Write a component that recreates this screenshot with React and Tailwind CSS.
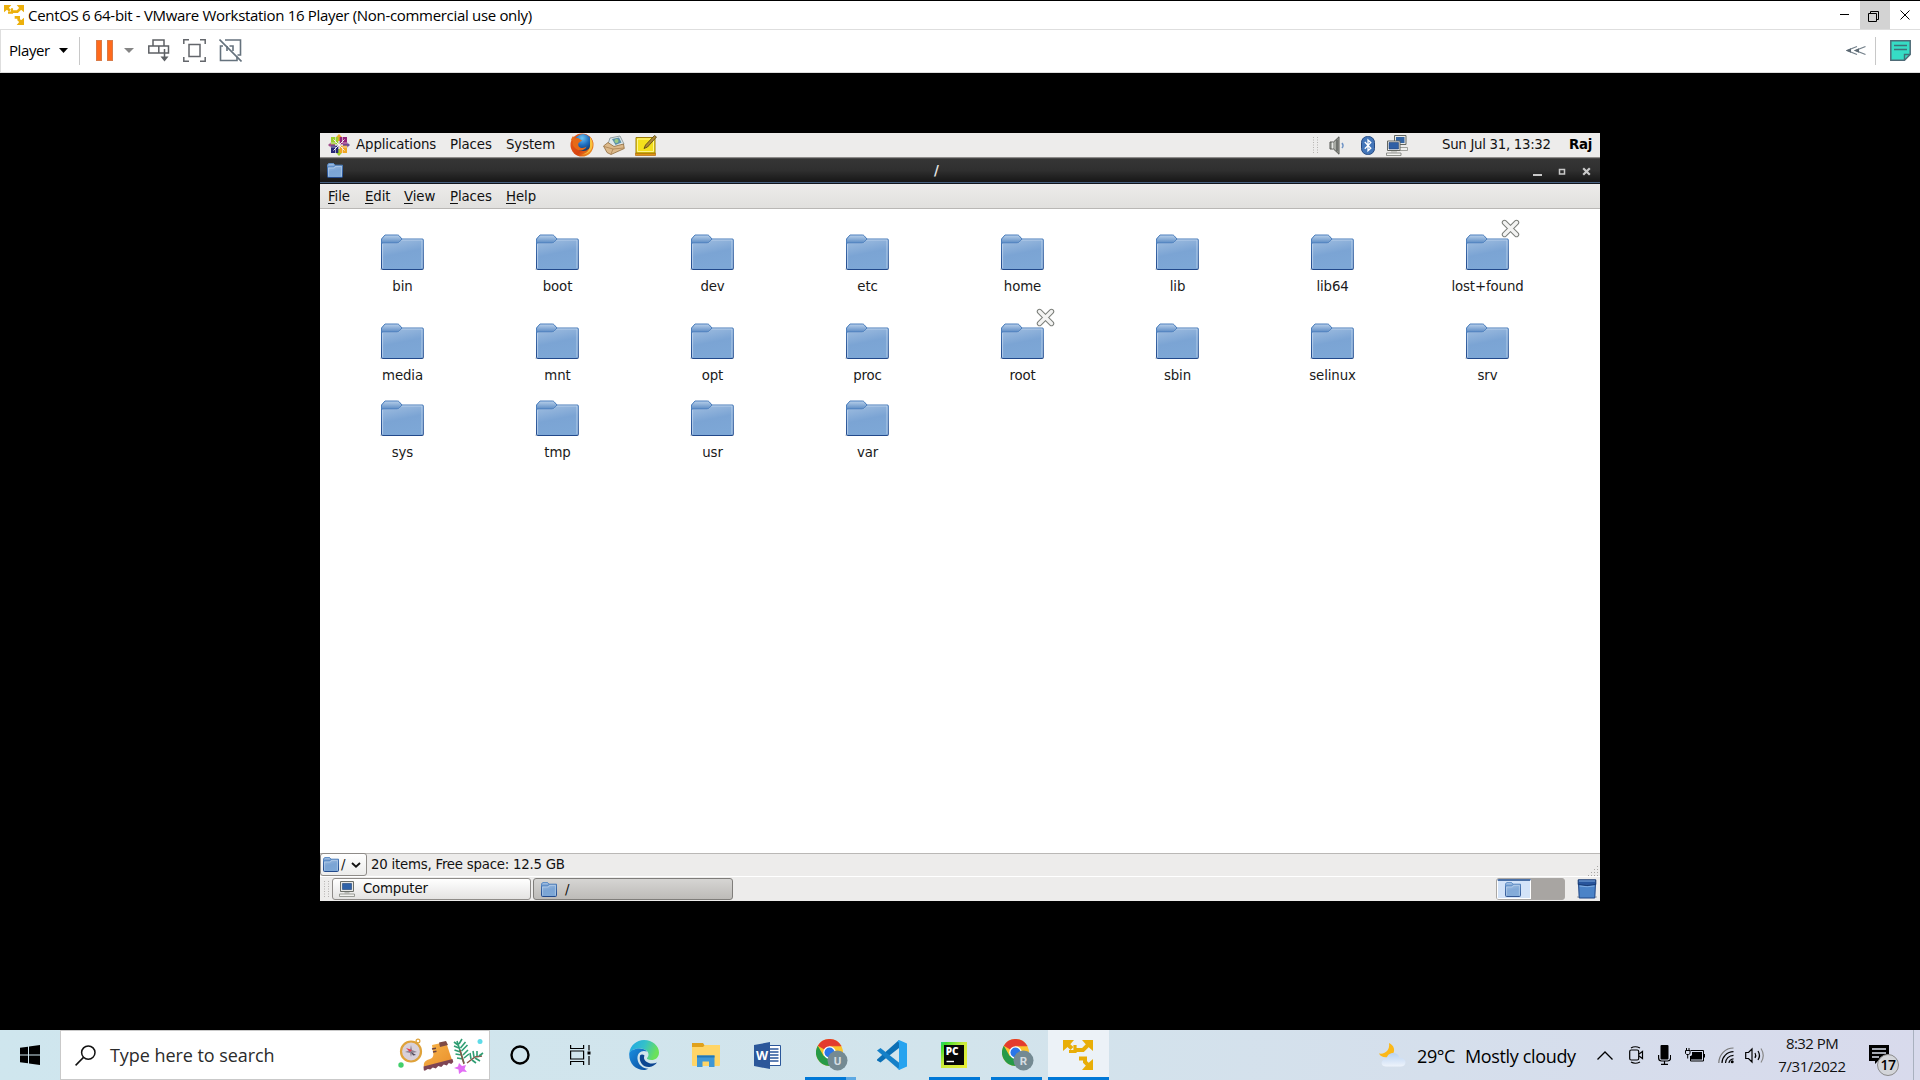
import React from 'react';

const folders = [
  [{ name: 'bin' }, { name: 'boot' }, { name: 'dev' }, { name: 'etc' }, { name: 'home' }, { name: 'lib' }, { name: 'lib64' }, { name: 'lost+found', locked: true }],
  [{ name: 'media' }, { name: 'mnt' }, { name: 'opt' }, { name: 'proc' }, { name: 'root', locked: true }, { name: 'sbin' }, { name: 'selinux' }, { name: 'srv' }],
  [{ name: 'sys' }, { name: 'tmp' }, { name: 'usr' }, { name: 'var' }],
];

function Gradients() {
  return (
    <svg width="0" height="0" className="absolute" aria-hidden="true">
      <defs>
        <linearGradient id="folderBody" x1="0" y1="0" x2="0.25" y2="1">
          <stop offset="0" stopColor="#a9c4e3" />
          <stop offset="0.6" stopColor="#7ba4d4" />
          <stop offset="1" stopColor="#7da7d6" />
        </linearGradient>
        <linearGradient id="folderTab" x1="0" y1="0" x2="0" y2="1">
          <stop offset="0" stopColor="#b9d0ea" />
          <stop offset="1" stopColor="#5d8cc5" />
        </linearGradient>
        <linearGradient id="folderEdge" x1="0" y1="0" x2="0" y2="1">
          <stop offset="0" stopColor="#4c7fbd" />
          <stop offset="1" stopColor="#22498b" />
        </linearGradient>
        <linearGradient id="edgeTop" x1="0" y1="0" x2="1" y2="0.3">
          <stop offset="0" stopColor="#1fa5e8" />
          <stop offset="0.55" stopColor="#35c1c8" />
          <stop offset="1" stopColor="#6be15a" />
        </linearGradient>
        <linearGradient id="edgeLow" x1="0" y1="0" x2="1" y2="1">
          <stop offset="0" stopColor="#1a8fe0" />
          <stop offset="1" stopColor="#0b4a9c" />
        </linearGradient>
        <linearGradient id="cloud" x1="0" y1="0" x2="0" y2="1">
          <stop offset="0" stopColor="#b9d3f2" />
          <stop offset="1" stopColor="#eef3fb" />
        </linearGradient>
        <linearGradient id="pycharm" x1="0" y1="0" x2="1" y2="1">
          <stop offset="0" stopColor="#21d789" />
          <stop offset="0.12" stopColor="#3fdc2c" />
          <stop offset="0.45" stopColor="#c9ea3c" />
          <stop offset="1" stopColor="#e9ee35" />
        </linearGradient>
        <linearGradient id="boot" x1="0" y1="0" x2="1" y2="1">
          <stop offset="0" stopColor="#f8b64c" />
          <stop offset="1" stopColor="#e98f2b" />
        </linearGradient>
        <radialGradient id="globe" cx="0.45" cy="0.25" r="0.8">
          <stop offset="0" stopColor="#6cc5f5" />
          <stop offset="0.5" stopColor="#1f6fc0" />
          <stop offset="1" stopColor="#12305f" />
        </radialGradient>
        <linearGradient id="fox" x1="0" y1="0" x2="1" y2="1">
          <stop offset="0" stopColor="#e8601a" />
          <stop offset="0.6" stopColor="#d8430f" />
          <stop offset="1" stopColor="#f6b32a" />
        </linearGradient>
      </defs>
    </svg>
  );
}

function Folder({ className }) {
  return (
    <svg viewBox="0 0 44 38" className={className} preserveAspectRatio="none">
      <path d="M0 34.5h44v1.5H0z" fill="#000" opacity="0.12" />
      <path d="M1.500 34.500V5.500L5 1.500h13l4 3.500h20.500q.8 0 .8.8v28.700q0 1-1 1H2.500q-1 0-1-1z" fill="url(#folderBody)" stroke="url(#folderEdge)" />
      <path d="M2.600 34V9.500h15.500l4-3.500h19.900v28" fill="none" stroke="#c4d8ef" strokeOpacity="0.75" />
      <path d="M1.500 9V5L5 1h12.500q1 0 1.700.8L22 5l-2.600 3q-.8 1-2 1z" fill="url(#folderTab)" stroke="#4c7fbd" />
    </svg>
  );
}

function SmallFolder({ className }) {
  return (
    <svg viewBox="0 0 16 15" className={className} preserveAspectRatio="none">
      <path d="M.5 13.500V2.200L1.800.6h4.700l1.400 1.600h7.600v11.300q0 1-1 1h-13q-1 0-1-1z" fill="url(#folderBody)" stroke="url(#folderEdge)" />
      <path d="M.5 4V2.200L1.800.6h4.700l1.400 1.600L6.800 4z" fill="url(#folderTab)" stroke="#5385c2" strokeWidth="0.800" />
      <path d="M1.600 13.200V5h5.800l1.200-1.600h5.800v9.800" fill="none" stroke="#c4d8ef" strokeOpacity="0.7" strokeWidth="0.800" />
    </svg>
  );
}

function LockedEmblem() {
  return (
    <svg viewBox="0 0 19 19" className="absolute left-[91px] -top-[15px] h-[19px] w-[19px]">
      <path d="M3.500 3.500l12 12M15.500 3.500l-12 12" stroke="#7b7e79" strokeWidth="5.400" strokeLinecap="round" />
      <path d="M3.500 3.500l12 12M15.500 3.500l-12 12" stroke="#f3f3f2" strokeWidth="3.400" strokeLinecap="round" />
    </svg>
  );
}

function FolderItem({ name, locked }) {
  return (
    <div className="relative flex w-[155px] flex-col items-center">
      <Folder className="-ml-[2px] h-[38px] w-[44px]" />
      {locked && <LockedEmblem />}
      <span className="mt-[7px] text-[13.333px] leading-4 tracking-[-0.12px] text-[#1a1a1a]">{name}</span>
    </div>
  );
}

function VmwareLogo({ className, color }) {
  return (
    <svg viewBox="0 0 30 30" className={className} fill="none" stroke={color} strokeWidth="4">
      <path d="M0 0h11L7.500 4 4 7.500 0 11zM30 0v11l-4-3.500L22.500 4 19 0zM30 30H19l3.500-4 3.500-3.500 4-3.500z" fill={color} stroke="none" />
      <path d="M3 3l6 5.500M27 3l-7 7h-7.500M27 27l-5-5v-3.500h-6" />
      <path d="M6 11.500h6V5" strokeWidth="3.200" />
    </svg>
  );
}

function Chrome({ letter, className }) {
  return (
    <svg viewBox="0 0 32 32" className={className}>
      <circle cx="13.500" cy="13.500" r="13.500" fill="#fbc52c" />
      <path d="M13.500 13.500L1.800 6.750A13.500 13.500 0 0 1 25.200 6.750H13.500z" fill="#e33b2e" />
      <path d="M1.800 6.750A13.500 13.500 0 0 0 13.500 27l5.800-10.100-5.800-3.400-5.800 3.400z" fill="#269a48" />
      <path d="M13.500 6.750h11.700" stroke="#e33b2e" strokeWidth="1" />
      <circle cx="13.500" cy="13.500" r="6.300" fill="#fff" />
      <circle cx="13.500" cy="13.500" r="5" fill="#2a76e8" />
      <circle cx="21.500" cy="21.500" r="10" fill="#748a93" />
      <text x="21.500" y="25.700" textAnchor="middle" fontSize="11.500" fontWeight="700" fontFamily="Roboto, sans-serif" fill="#d5dde1">{letter}</text>
    </svg>
  );
}

function HostTitleBar() {
  return (
    <header className="flex h-[29px] items-center border-t border-black bg-white">
      <VmwareLogo className="ml-1 h-5 w-5" color="#ecb00c" />
      <h1 className="ml-[4px] flex-1 whitespace-nowrap text-[15px] leading-5 tracking-[-0.315px] text-black">
        CentOS 6 64-bit - VMware Workstation 16 Player (Non-commercial use only)
      </h1>
      <div className="flex h-full text-black">
        <div className="flex w-[30px] items-center justify-center">
          <svg viewBox="0 0 10 10" className="h-[10px] w-[10px]"><path d="M0 4.500h9" stroke="currentColor" /></svg>
        </div>
        <div className="flex w-[30px] items-center justify-center bg-[#d3d3d3]">
          <svg viewBox="0 0 11 11" className="-ml-[3px] mt-[2px] h-[11px] w-[11px]" fill="none" stroke="currentColor">
            <path d="M.5 2.500h8v8h-8zM2.500 2.500v-2h8v8h-2" />
          </svg>
        </div>
        <div className="flex w-[30px] items-center justify-center">
          <svg viewBox="0 0 10 10" className="h-[10px] w-[10px]"><path d="M.5.5l9 9M9.500.5l-9 9" stroke="currentColor" /></svg>
        </div>
      </div>
    </header>
  );
}

function HostToolbar() {
  return (
    <div className="flex h-11 items-center border-y border-l border-[#dedede] bg-white pb-px">
      <span className="-mt-px ml-[8px] w-[50px] whitespace-nowrap text-[15px] leading-5 tracking-[-0.4px] text-black">Player</span>
      <svg viewBox="0 0 9 5" className="h-[5px] w-[9px]"><path d="M0 0h9L4.500 5z" fill="#000" /></svg>
      <div className="ml-[11px] h-7 w-px bg-[#c8c8c8]" />
      <div className="ml-4 flex gap-[5px]">
        <div className="h-[21px] w-[6px] border border-[#d97b48] bg-[#ff6a1c]" />
        <div className="h-[21px] w-[6px] border border-[#d97b48] bg-[#ff6a1c]" />
      </div>
      <svg viewBox="0 0 10 5" className="ml-[11px] h-[5px] w-[10px]"><path d="M0 0h10L5 5z" fill="#858585" /></svg>
      <svg viewBox="0 0 22 23" className="ml-[14px] h-[23px] w-[22px]" fill="none" stroke="#5d6064" strokeWidth="1.500">
        <path d="M5 1h11v6H5zM.8 7h10v7H.8zM10.800 7h9.700v7h-9.700zM16.500 10v10.500" />
        <path d="M12.500 17.500h8l-4 5z" fill="#5d6064" stroke="none" />
      </svg>
      <svg viewBox="0 0 23 23" className="ml-[13px] h-[23px] w-[23px]" fill="none" stroke="#63666b" strokeWidth="1.500">
        <path d="M6 5.500h11v12H6zM.8 5V.8H6M17 .8h5.200V5M22.200 18v4.200H17M6 22.200H.8V18" />
      </svg>
      <svg viewBox="0 0 23 23" className="ml-[13px] h-[23px] w-[23px]" fill="none" stroke="#65727d" strokeWidth="1.600">
        <path d="M6 1h15.500v15h-3M4 7H1.500v14.500H18v-4M10.500 7H14v5M8 7v5" />
        <path d="M.5.5l22 22" />
      </svg>
      <div className="flex-1" />
      <svg viewBox="0 0 20 11" className="h-[11px] w-[20px]" fill="none" stroke="#74818b" strokeWidth="1.300">
        <path d="M11 1.500L1 5.500l10 4M19.500 1.500L9.500 5.500l10 4" />
        <path d="M0 5.500l5-2.200v4.400zM8 5.500l5-2.200v4.400z" fill="#5d6a74" stroke="none" />
      </svg>
      <div className="ml-[9px] h-7 w-px bg-[#c8c8c8]" />
      <svg viewBox="0 0 21 21" className="ml-[14px] mr-[9px] h-[21px] w-[21px]">
        <path d="M.8.8h19.400v13.700l-5.700 5.700H.8z" fill="#36dcc5" stroke="#4f6b77" strokeWidth="1.500" />
        <path d="M4 5.500h13M4 9.500h13M20 14.500h-5.500V20" fill="none" stroke="#3f7078" strokeWidth="1.400" />
      </svg>
    </div>
  );
}

function CentosLogo() {
  return (
    <svg viewBox="0 0 22 22" className="h-[22px] w-[22px]">
      <path d="M11 0l2.800 3v4h-5.600V3z" fill="#efa724" />
      <path d="M22 11l-3 2.800h-4V8.200h4z" fill="#6b4f97" />
      <path d="M11 22l-2.800-3v-4h5.600v4z" fill="#9ccd2a" />
      <path d="M0 11l3-2.800h4v5.600H3z" fill="#a14f8c" />
      <path d="M3 3h7.300v7.300H3z" fill="#9ccd2a" />
      <path d="M11.700 3H19v7.300h-7.300z" fill="#932279" />
      <path d="M3 11.700h7.300V19H3z" fill="#262577" />
      <path d="M11.700 11.700H19V19h-7.300z" fill="#efa724" />
      <path d="M5.500 5.500l11 11M16.500 5.500l-11 11" stroke="#f4eef2" strokeWidth="1" />
      <path d="M7.500 2v7h-6M14.500 2v7h6M7.500 20v-7h-6M14.500 20v-7h6" fill="none" stroke="#f4eef2" strokeWidth="0.600" />
    </svg>
  );
}

function GnomeTopPanel() {
  return (
    <div className="flex h-6 items-center bg-[#edeceb] text-[13.333px] leading-4 text-[#111]">
      <div className="ml-2"><CentosLogo /></div>
      <span className="ml-[6px] w-[94px] tracking-[-0.1px]">Applications</span>
      <span className="w-[56px] tracking-[-0.1px]">Places</span>
      <span className="w-[64px] tracking-[-0.1px]">System</span>
      <svg viewBox="0 0 24 24" className="h-6 w-6">
        <circle cx="12" cy="12" r="11.500" fill="url(#fox)" />
        <circle cx="13" cy="9.500" r="8.600" fill="url(#globe)" />
        <path d="M1 7c1-3 2-4 2-4l1.500 2.500C7 4.500 8.500 5 9.500 6L12 7.500 8.500 10c-1 3 1 5 4 5 2 0 3-1 4-1.500-1 3.500-6 5-9.500 3C3 14 2 11 3 8z" fill="#e66a17" />
        <path d="M20 4c3.500 4 3.500 9 1 13-2 3-6 5-10 4.500 6-.5 9.500-5 9-10.500z" fill="#f9c23c" />
      </svg>
      <svg viewBox="0 0 22 20" className="ml-[9px] h-5 w-[22px]">
        <path d="M7 3l10-2 4 8-9 5-7-5z" fill="#dfe8ea" stroke="#7f8c8d" strokeWidth="0.800" />
        <path d="M9 4l7-1.500 2.500 5-6 2.500z" fill="#5b90a8" />
        <circle cx="13.500" cy="6" r="2" fill="#9bcb86" />
        <path d="M.5 11L5 7.500l6 4 9.500-2.500.8 4.500L8 19.500l-4-2z" fill="#dcb98a" stroke="#8f6c3d" strokeWidth="0.800" />
        <path d="M1 11.500l9 2.500 11-1M10 14l-2 5" fill="none" stroke="#a98252" strokeWidth="0.800" />
      </svg>
      <svg viewBox="0 0 22 21" className="ml-[10px] h-[21px] w-[22px]">
        <path d="M.5 18h20v2.500H.5z" fill="#e09314" stroke="#b56a08" strokeWidth="0.700" />
        <path d="M1 2.500h19v15.500H1z" fill="#f4e01c" stroke="#9d7c05" />
        <path d="M2.500 4h16v12.500h-16z" fill="none" stroke="#fff58b" />
        <path d="M9 13.500l1.500-3.500 9-9.500 2 1.500-9 10z" fill="#b08a35" stroke="#4f4012" strokeWidth="0.800" />
      </svg>
      <div className="flex-1" />
      <DotHandle />
      <svg viewBox="0 0 16 19" className="ml-[11px] h-[19px] w-4">
        <path d="M1 6h3.500L10 .8v17.400L4.500 13H1z" fill="#a5a8a2" stroke="#555753" />
        <path d="M3.500 6.500v6" stroke="#e7e8e6" strokeWidth="1.200" />
        <path d="M8 3.500v12" stroke="#5e605c" strokeWidth="1.500" />
        <path d="M13 7q2 2.500 0 5" fill="none" stroke="#6f93c5" strokeWidth="1.500" />
      </svg>
      <svg viewBox="0 0 14 19" className="ml-4 h-[19px] w-[14px]">
        <rect x="0.500" y="0.500" width="13" height="18" rx="6" fill="#4476b9" stroke="#274b83" />
        <path d="M3.800 6l6 6.200L7 14.800V4l2.800 2.600-6 6.200" fill="none" stroke="#fff" strokeWidth="1.300" />
      </svg>
      <svg viewBox="0 0 22 21" className="ml-[11px] h-[21px] w-[22px]">
        <path d="M8.500.5h11.500v9H8.500z" fill="#e9e9e7" stroke="#62655f" />
        <path d="M10 2h8.500v6H10z" fill="#3465a4" />
        <path d="M12 12.500h9.500v3H12z" fill="#f0f0ee" stroke="#8a8c87" strokeWidth="0.800" />
        <path d="M1.500 6h12.500v9.500H1.500z" fill="#f5f5f4" stroke="#62655f" />
        <path d="M3 7.500h9.500V14H3z" fill="#2f5fa5" stroke="#1f4177" strokeWidth="0.600" />
        <path d="M5 16h6v1.500H5z" fill="#c9cac6" />
        <path d="M.5 18h14.500v2.500H.5z" fill="#f2f2f0" stroke="#777a74" strokeWidth="0.800" />
      </svg>
      <span className="ml-[34px] w-[127px] whitespace-nowrap tracking-[-0.3px]">Sun Jul 31, 13:32</span>
      <span className="mr-[8px] font-bold tracking-[-0.3px] text-black">Raj</span>
    </div>
  );
}

function DotHandle() {
  return (
    <svg viewBox="0 0 5 17" className="h-[17px] w-[5px]">
      <path d="M.5 0v17M4.500 0v17" stroke="#b5b3b1" strokeDasharray="1 1.500" />
    </svg>
  );
}

function NautilusTitleBar() {
  return (
    <div className="flex h-[26px] items-center border-b border-[#10151c] bg-gradient-to-b from-[#363636] via-[#2f2f2f] to-[#151515] pt-px shadow-[inset_0_1px_0_#474747,inset_0_-1px_0_#47607f]">
      <SmallFolder className="ml-[7px] -mt-px h-[15px] w-4" />
      <span className="flex-1 text-center text-[13.333px] font-bold leading-4 text-[#e6e6e6]">
        <span className="mr-[3px]">/</span>
      </span>
      <div className="mr-[9px] flex h-[9px] gap-[16px] text-[#c9c9c9]">
        <div className="h-full w-[9px] border-b-2 border-current" />
        <svg viewBox="0 0 8 9" className="h-[9px] w-2"><path d="M1.500 2.500h5v4.500h-5z" fill="none" stroke="currentColor" strokeWidth="1.500" /></svg>
        <svg viewBox="0 0 9 9" className="h-[9px] w-[9px]"><path d="M1.200 1.200l6.600 6.600M7.800 1.200L1.200 7.800" stroke="currentColor" strokeWidth="2.200" /></svg>
      </div>
    </div>
  );
}

function MenuItem({ label, className }) {
  return (
    <span className={className}>
      <span className="underline decoration-1 underline-offset-2">{label[0]}</span>
      {label.slice(1)}
    </span>
  );
}

function NautilusMenuBar() {
  return (
    <div className="flex h-[25px] items-center border-b border-[#b9b7b5] bg-gradient-to-b from-[#edecea] to-[#e1e0de] pl-2 pt-[2px] text-[13.333px] leading-4 tracking-[-0.1px] text-[#111]">
      <MenuItem label="File" className="w-[37px]" />
      <MenuItem label="Edit" className="w-[39px]" />
      <MenuItem label="View" className="w-[46px]" />
      <MenuItem label="Places" className="w-[56px]" />
      <MenuItem label="Help" />
    </div>
  );
}

function NautilusStatusBar() {
  return (
    <div className="flex h-[23px] items-stretch border-t border-[#bab8b6] bg-[#edeceb]">
      <div className="-mt-px flex w-[47px] items-center rounded-[3px] border border-[#8e8b88] bg-gradient-to-b from-white to-[#ececeb] pl-[2px]">
        <SmallFolder className="h-[15px] w-4" />
        <span className="ml-[2px] text-[13.333px] leading-4 text-[#111]">/</span>
        <svg viewBox="0 0 10 6" className="ml-[5px] h-[6px] w-[10px]"><path d="M1 1l4 3.600L9 1" fill="none" stroke="#111" strokeWidth="1.900" /></svg>
      </div>
      <span className="ml-[4px] flex-1 self-center whitespace-nowrap text-[13.333px] leading-4 tracking-[-0.23px] text-[#111]">20 items, Free space: 12.5 GB</span>
      <svg viewBox="0 0 11 11" className="mr-[1px] h-[11px] w-[11px] self-end" fill="none" stroke="#a9a7a5" strokeDasharray="1 2">
        <path d="M0 10.500h11M3 7.500h8M6 4.500h5M9 1.500h2" />
      </svg>
    </div>
  );
}

function ComputerIcon() {
  return (
    <svg viewBox="0 0 16 16" className="h-4 w-4">
      <path d="M1.500.5h13v10h-13z" fill="#e8e8e6" stroke="#6c6f69" />
      <path d="M3.500 2.500h9v6h-9z" fill="#2f62a8" stroke="#1f4177" strokeWidth="0.600" />
      <path d="M5.500 11h5v1.500h-5z" fill="#b9bab7" />
      <path d="M.5 13h15v2.500H.5z" fill="#f1f1ef" stroke="#858882" strokeWidth="0.800" />
    </svg>
  );
}

function GnomeBottomPanel() {
  return (
    <div className="flex h-[25px] items-center border-t border-white bg-[#edeceb] text-[13.333px] leading-4 text-[#111]">
      <div className="ml-[4px]"><DotHandle /></div>
      <div className="ml-[3px] flex h-[22px] w-[199px] items-center rounded-[3px] border border-[#8e8b88] bg-gradient-to-b from-white to-[#e4e3e2] pl-[6px]">
        <ComputerIcon />
        <span className="ml-2 tracking-[-0.2px]">Computer</span>
      </div>
      <div className="ml-[2px] flex h-[22px] w-[200px] items-center rounded-[3px] border border-[#7f7d7a] bg-gradient-to-b from-[#d6d5d3] to-[#bdbbb8] pl-[7px]">
        <SmallFolder className="mt-px h-[15px] w-4" />
        <span className="ml-2 mt-px">/</span>
      </div>
      <div className="flex-1" />
      <div className="flex h-[22px] w-[69px] overflow-hidden rounded-[3px] border border-[#aaa7a4] bg-[#a8a5a2]">
        <div className="flex w-[34px] items-center justify-center border border-t-2 border-white border-t-[#4a6fa5] bg-[#d3e3f8]">
          <SmallFolder className="-ml-[2px] h-[15px] w-4 opacity-90" />
        </div>
      </div>
      <svg viewBox="0 0 20 20" className="ml-[12px] mr-[3px] h-5 w-5">
        <path d="M0 17h20v2H0z" fill="#000" opacity="0.150" />
        <path d="M1.500 4h17L17.800 19H2.200z" fill="#4b83c7" stroke="#1f4585" />
        <path d="M1.200.8h17.600v4.700q-9 2-17.600 0z" fill="#28559c" stroke="#183a73" />
        <path d="M2 2h16M2.500 7q8 1.500 15 0" fill="none" stroke="#7fabe0" />
      </svg>
    </div>
  );
}

function GuestDesktop() {
  return (
    <main className="flex h-[768px] w-[1280px] flex-col font-['DejaVu_Sans',sans-serif]">
      <GnomeTopPanel />
      <div className="h-px bg-[#8d8b89]" />
      <NautilusTitleBar />
      <NautilusMenuBar />
      <section className="flex-1 bg-white pl-[5px] pt-[25px]">
        <div className="flex h-[89px]">{folders[0].map((f) => <FolderItem key={f.name} {...f} />)}</div>
        <div className="flex h-[77px]">{folders[1].map((f) => <FolderItem key={f.name} {...f} />)}</div>
        <div className="flex">{folders[2].map((f) => <FolderItem key={f.name} {...f} />)}</div>
      </section>
      <NautilusStatusBar />
      <GnomeBottomPanel />
    </main>
  );
}

function SearchArt() {
  return (
    <svg viewBox="0 0 86 36" className="h-9 w-[86px]">
      <circle cx="13" cy="13.500" r="10" fill="#d8d0da" stroke="#dfa23a" strokeWidth="2.200" />
      <circle cx="20" cy="3" r="1.900" fill="none" stroke="#dfa23a" strokeWidth="1.200" />
      <path d="M13 7l1 5 5 2-5 1-1 4-1-4-5-1 5-2z" fill="#8e8492" />
      <path d="M8 10l6 2-2 2z" fill="#e2384d" />
      <path d="M13 14l5 3-3 .5z" fill="#51485a" />
      <circle cx="3" cy="27" r="2.700" fill="#42cf6c" />
      <path d="M34 7l14-3 6 18-28 7c-1-5 2-7 6-8 3-1 4-4 3-7z" fill="url(#boot)" />
      <path d="M41 4.500l7-1.500 2 4-8 2z" fill="#7e4a45" />
      <path d="M34 11l4-.8M35 14l3.500-.8" stroke="#6e4541" strokeWidth="1.400" />
      <path d="M25.500 28.500l29-7.500.8 3-2 2-2.500-1-2 2.500-3-1-2.500 2.500-3-1-2.500 2.500-3-1-2.500 2-2.500-.5-3 1.800-1-.5z" fill="#7d4453" />
      <g stroke="#2f9e73" strokeWidth="1.600" fill="none">
        <path d="M66 25L59 3M60 7l-4-3M61 10l-5-2M62.500 14l-6-2M63.500 17l-6-1M65 21l-6-1M61 6l3-5M62.500 10l5-6M63.500 13l6-6M65 17l5-5M66 20l5-4" />
      </g>
      <path d="M66 26L62 12M69 25l8-6 7-1" fill="none" stroke="#8a5648" strokeWidth="1.500" />
      <path d="M73 21l-1-6M76 19l-1-6M79 18l0-5M74 22l4 3M77 20l5 3M81 18l4-3" stroke="#2f9e73" strokeWidth="1.600" />
      <path d="M61 25l3 3 4-1-1.500 4 2.500 3-4.500-.5L61 36l-.5-4.500L56 30l4-1.500z" fill="#e26df5" />
      <circle cx="82" cy="3.500" r="2.500" fill="#5fdbe8" />
    </svg>
  );
}

function TaskbarItem({ className = '', children }) {
  return <div className={`flex h-full flex-col items-center justify-center ${className}`}>{children}</div>;
}

function Taskbar() {
  return (
    <footer className="flex h-[50px] items-stretch bg-gradient-to-r from-[#cfe6ee] via-[#d2e4ec] via-50% to-[#d8daec] text-black">
      <div className="flex w-[60px] items-center justify-center">
        <svg viewBox="0 0 20 20" className="h-5 w-5"><path d="M0 2.800l8-1.100v7.800H0zM9 1.500L20 0v9.500H9zM0 10.500h8v7.800l-8-1.100zM9 10.500h11V20L9 18.500z" /></svg>
      </div>
      <div className="flex w-[430px] items-center border border-[#c9c9c9] bg-white">
        <svg viewBox="0 0 21 21" className="ml-[14px] h-[21px] w-[21px]" fill="none" stroke="#111" strokeWidth="1.500">
          <circle cx="13.300" cy="7.600" r="6.700" /><path d="M8.500 12.400L.6 20.400" />
        </svg>
        <span className="ml-[14px] flex-1 whitespace-nowrap text-[18px] leading-6 tracking-[-0.06px] text-[#2b2b2b]">Type here to search</span>
        <div className="mr-[5px] mt-[1px]"><SearchArt /></div>
      </div>
      <TaskbarItem className="w-[60px]">
        <svg viewBox="0 0 20 20" className="h-5 w-5"><circle cx="10" cy="10" r="8.500" fill="none" stroke="#000" strokeWidth="2.400" /></svg>
      </TaskbarItem>
      <TaskbarItem className="w-[60px]">
        <svg viewBox="0 0 21 20" className="h-5 w-[21px]" fill="none" stroke="#000" strokeWidth="1.200">
          <path d="M.6 0v3.500h13V0M.6 6h13v8H.6zM.6 20v-3.500h13V20M19 0v5.500M19 11v9" />
          <path d="M17.500 6.500h3v3h-3z" fill="#000" stroke="none" />
        </svg>
      </TaskbarItem>
      <TaskbarItem className="w-[67px]">
        <svg viewBox="0 0 30 30" className="h-[30px] w-[30px]">
          <path d="M.3 13C1.200 5.500 7.500 0 15 0c8.500 0 15 6 15 12.500 0 5-3.700 7.500-7.500 7.500-3.500 0-5-1.200-4.500-2 1-1.200 1.500-2 1.500-3.500 0-3.500-4-6-9-6C5.500 8.500 2 10.500.3 13z" fill="url(#edgeTop)" />
          <path d="M.3 13C2 10 6 8.500 10.500 8.500c3 0 6 1.300 7.500 3-6-2-10 2-9.500 7.500.5 6 6 10 11 9.800C17.500 29.800 16 30 15 30 6 30-.6 22.500.3 13z" fill="url(#edgeLow)" />
          <path d="M11 15.500c-1.500 7 3.500 12 9.500 11.500 3-.3 5.500-2 7.500-4.500-4.500 2-9 1-11.500-1.500-1.500-1.500-2-3.500-1-5.500-1.500-1.200-3.500-1.200-4.500 0z" fill="#0c4591" />
        </svg>
      </TaskbarItem>
      <TaskbarItem className="w-[58px]">
        <svg viewBox="0 0 28 24" className="-mt-px h-6 w-7">
          <path d="M0 0h11l2 3v3H0z" fill="#e0a11c" />
          <path d="M0 4h11l2-2h15v20q0 1-1 1H1q-1 0-1-1z" fill="#ffd567" />
          <path d="M5 12.500h17.500V24H17v-5.500h-6.500V24H5z" fill="#3e97d6" />
          <path d="M5 12.500h17.500v2H5z" fill="#2277b6" />
        </svg>
      </TaskbarItem>
      <TaskbarItem className="w-[65px]">
        <svg viewBox="0 0 27 27" className="h-[27px] w-[27px]">
          <path d="M14 3.500h12.500v20H14z" fill="#fff" stroke="#2b579a" />
          <path d="M16 7h8.500M16 10h8.500M16 13h8.500M16 16h8.500M16 19h8.500" stroke="#2b579a" strokeWidth="1.400" />
          <path d="M0 3l16-3v27L0 24z" fill="#2b579a" />
          <text x="8" y="18.200" textAnchor="middle" fontSize="12.500" fontWeight="700" fontFamily="Open Sans, sans-serif" fill="#fff">W</text>
        </svg>
      </TaskbarItem>
      <div className="ml-[5px] flex w-[51px] flex-col">
        <div className="flex flex-1 items-center pl-[11px] pt-[3px]"><Chrome letter="U" className="h-8 w-8" /></div>
        <div className="flex h-[3px]"><div className="w-[41px] bg-[#0078d7]" /><div className="flex-1 bg-[#5ea9e3]" /></div>
      </div>
      <TaskbarItem className="w-[73px]">
        <svg viewBox="0 0 30 30" className="-ml-[1px] h-[30px] w-[30px]">
          <path d="M22 0v8L3.500 22.500 0 20.500v-1z" fill="#0b6fb5" />
          <path d="M0 10.500l3.500-2.500L22.500 23v7z" fill="#1580c8" />
          <path d="M22 0l8 3.500v23L22 30l-1.500-2c1 .3 1.500-.3 1.500-1.500v-23c0-1.200-.5-1.800-1.500-1.500z" fill="#27a3ef" />
        </svg>
      </TaskbarItem>
      <div className="flex w-[51px] flex-col">
        <div className="flex flex-1 items-center pl-[12px] pt-[3px]">
          <svg viewBox="0 0 26 26" className="h-[26px] w-[26px]">
            <path d="M0 0h26v26H0z" fill="url(#pycharm)" />
            <path d="M3 3h20v20H3z" fill="#060606" />
            <text x="4.800" y="13" fontSize="10" fontWeight="800" fontFamily="Open Sans, sans-serif" fill="#fff">PC</text>
            <path d="M5.500 19.500h7.500" stroke="#fff" strokeWidth="1.400" />
          </svg>
        </div>
        <div className="h-[3px] bg-[#0078d7]" />
      </div>
      <div className="ml-[11px] flex w-[51px] flex-col">
        <div className="flex flex-1 items-center pl-[11px] pt-[3px]"><Chrome letter="R" className="h-8 w-8" /></div>
        <div className="h-[3px] bg-[#0078d7]" />
      </div>
      <div className="ml-[6px] flex w-[61px] flex-col bg-[#ecf2f7]">
        <div className="flex flex-1 items-center pl-[15px] pt-[3px]"><VmwareLogo className="h-[30px] w-[30px]" color="#e8ae08" /></div>
        <div className="h-[3px] bg-[#0078d7]" />
      </div>
      <div className="flex-1" />
      <div className="flex items-center">
        <svg viewBox="0 0 27 24" className="-mt-px h-6 w-[27px]">
          <path d="M10 0c5 2 7 8 3 12-4 3.500-11 3-13-1.500 7 1 11-4 10-10.500z" fill="#fbb819" />
          <path d="M7 23.500C3 23.500 2 20.500 3 18.500s3-2.500 4.500-2.200C8 12 11 9.800 14.500 10s5.500 2.300 6 5c3.500-.3 6 1.500 6 4.200s-2 4.300-5 4.300z" fill="url(#cloud)" />
        </svg>
        <span className="ml-[11px] mt-px w-[48px] whitespace-nowrap text-[18px] leading-6 tracking-[-0.4px]">29°C</span>
        <span className="mt-px w-[132px] whitespace-nowrap text-[18px] leading-6 tracking-[-0.35px]">Mostly cloudy</span>
        <svg viewBox="0 0 16 9" className="h-[9px] w-4" fill="none" stroke="#000" strokeWidth="1.300"><path d="M.5 8.500L8 1l7.500 7.500" /></svg>
        <svg viewBox="0 0 15 18" className="ml-4 h-[18px] w-[15px]" fill="none" stroke="#000" strokeWidth="1.200">
          <rect x="0.700" y="4" width="9" height="10" rx="1.500" /><path d="M10 8l3.500-2.500v7L10 10M2 2q4-2.500 9 0M2 16q4 2.500 9 0" />
        </svg>
        <svg viewBox="0 0 13 20" className="ml-[14px] h-5 w-[13px]">
          <rect x="2.500" y="0" width="8" height="14.500" rx="1" /><path d="M.6 10v3q0 3 3 3h6q3 0 3-3v-3M6.500 16v3M3 19.300h7" fill="none" stroke="#000" strokeWidth="1.200" />
        </svg>
        <svg viewBox="0 0 20 15" className="ml-[14px] h-[15px] w-5">
          <path d="M5.500 2.500h13v10.500h-13V8" fill="none" stroke="#000" /><path d="M7 4h10v7.500H5.500V8.500L7 7zM18.500 6H20v3.500h-1.500z" />
          <path d="M.5 2.500H5v3L3.700 6.500H1.700L.5 5.500zM1.500 0v3M4 0v3M2.700 6.500v4" fill="none" stroke="#000" />
        </svg>
        <svg viewBox="0 0 16 17" className="ml-[13px] h-[17px] w-4" fill="none" stroke="#000" strokeWidth="1.200">
          <path d="M.8 16C.8 7.500 7.500 1 15.500 1" stroke="#777" /><path d="M4 16C4 10 9 4.700 15.500 4.700M7.500 16c0-4 3.500-7.700 8-7.700M11 16c0-2 2-4.200 4.500-4.200" />
          <circle cx="14.200" cy="14.700" r="1.500" fill="#000" stroke="none" />
        </svg>
        <svg viewBox="0 0 20 17" className="ml-[11px] h-[17px] w-5" fill="none" stroke="#000" strokeWidth="1.200">
          <path d="M.7 5.500h2.800L7 2v13l-3.500-3.500H.7zM10 6q1.500 2.500 0 5M13 4q3 4.500 0 9" /><path d="M16 1.500q4.500 7 0 14" stroke="#888" />
        </svg>
        <div className="ml-[13px] flex w-[68px] flex-col items-center whitespace-nowrap text-[15px] leading-[23px] text-[#111]">
          <span className="-mt-[1px] tracking-[-0.55px]">8:32 PM</span>
          <span className="tracking-[-0.4px]">7/31/2022</span>
        </div>
        <div className="relative ml-[23px] h-5 w-[20px]">
          <svg viewBox="0 0 20 19" className="h-[19px] w-5"><path d="M0 0h20v16H9l-3 3v-3H0z" /><path d="M3 4h14M3 8h14M3 12h7" stroke="#dbe2ee" strokeWidth="1.500" /></svg>
          <div className="absolute left-[8px] top-[9px] flex h-[22px] w-[22px] items-center justify-center rounded-full border border-[#8a8a8a] bg-[#d3d5d9] text-[14px] font-semibold leading-none tracking-[-0.5px]">17</div>
        </div>
        <div className="ml-[24px] mr-[6px] h-[50px] w-px bg-[#a9b1bf]" />
      </div>
    </footer>
  );
}

export default function App() {
  return (
    <div className="flex h-screen w-full flex-col overflow-hidden bg-black font-['Open_Sans',sans-serif]">
      <Gradients />
      <HostTitleBar />
      <HostToolbar />
      <div className="flex flex-1 items-start justify-center pt-[60px]"><GuestDesktop /></div>
      <Taskbar />
    </div>
  );
}
